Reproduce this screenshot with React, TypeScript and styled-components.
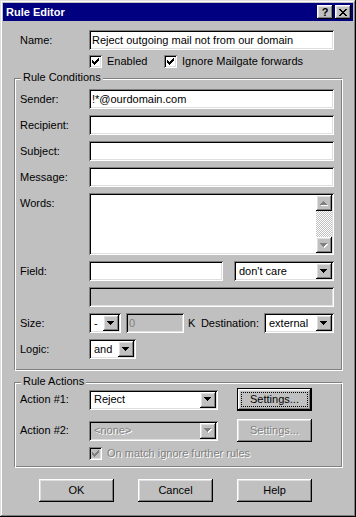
import React from "react";
import styled, { createGlobalStyle, css } from "styled-components";

const GlobalStyle = createGlobalStyle`
  * { box-sizing: border-box; }
  html, body { margin: 0; padding: 0; background: #c0c0c0; }
  body {
    font-family: "Liberation Sans", Arial, sans-serif;
    font-size: 11px;
    color: #000;
  }
`;

const raisedBevel = css`
  box-shadow: inset -1px -1px #000, inset 1px 1px #fff, inset -2px -2px #808080,
    inset 2px 2px #dfdfdf;
`;

const sunkenBevel = css`
  box-shadow: inset 1px 1px #808080, inset -1px -1px #fff, inset 2px 2px #000,
    inset -2px -2px #dfdfdf;
`;

const disabledText = css`
  color: #808080;
  text-shadow: 1px 1px 0 #fff;
`;

const Window = styled.div`
  width: 356px;
  height: 517px;
  padding: 3px;
  background: #c0c0c0;
  box-shadow: inset -1px -1px #000, inset 1px 1px #dfdfdf, inset -2px -2px #808080,
    inset 2px 2px #fff;
  display: flex;
  flex-direction: column;
`;

const TitleBar = styled.div`
  height: 18px;
  flex: none;
  background: #000080;
  color: #fff;
  display: flex;
  align-items: center;
  padding: 0 2px 0 3px;
`;

const TitleText = styled.div`
  flex: 1;
  font-weight: bold;
  line-height: 13px;
`;

const TitleButtons = styled.div`
  display: flex;
  gap: 2px;
`;

const TitleButton = styled.div`
  width: 16px;
  height: 14px;
  background: #c0c0c0;
  ${raisedBevel};
  display: flex;
  align-items: center;
  justify-content: center;
  color: #000;
  font-weight: bold;
  font-size: 11px;
  line-height: 11px;
`;

const Body = styled.div`
  padding: 9px 10px 0 11px;
  display: flex;
  flex-direction: column;
`;

const TopSection = styled.div`
  padding: 0 9px 0 6px;
  display: flex;
  flex-direction: column;
  gap: 5px;
`;

const Row = styled.div<{ $h?: number; $top?: boolean; $mt?: number; $indent?: boolean }>`
  display: flex;
  align-items: ${(p) => (p.$top ? "flex-start" : "center")};
  height: ${(p) => p.$h ?? 20}px;
  margin-top: ${(p) => p.$mt ?? 0}px;
  padding-left: ${(p) => (p.$indent ? 69 : 0)}px;
  flex: none;
`;

const Label = styled.span<{ $top?: boolean }>`
  width: 69px;
  flex: none;
  line-height: 13px;
  white-space: nowrap;
  padding-top: ${(p) => (p.$top ? 4 : 0)}px;
`;

const InlineText = styled.span<{ $ml?: number; $mr?: number; $disabled?: boolean }>`
  line-height: 13px;
  white-space: nowrap;
  margin-left: ${(p) => p.$ml ?? 0}px;
  margin-right: ${(p) => p.$mr ?? 0}px;
  ${(p) => p.$disabled && disabledText};
`;

const Spacer = styled.div`
  flex: 1;
`;

const TextBox = styled.div<{ $w?: number; $disabled?: boolean; $ml?: number }>`
  ${sunkenBevel};
  background: ${(p) => (p.$disabled ? "#c0c0c0" : "#fff")};
  color: ${(p) => (p.$disabled ? "#808080" : "#000")};
  height: 20px;
  ${(p) => (p.$w ? `width: ${p.$w}px; flex: none;` : "flex: 1;")}
  margin-left: ${(p) => p.$ml ?? 0}px;
  padding: 0 3px;
  display: flex;
  align-items: center;
  white-space: nowrap;
  overflow: hidden;
  line-height: 13px;
`;

const TextArea = styled.div`
  ${sunkenBevel};
  background: #fff;
  flex: 1;
  height: 62px;
  padding: 2px;
  display: flex;
  justify-content: flex-end;
`;

const ScrollBar = styled.div`
  width: 16px;
  display: flex;
  flex-direction: column;
`;

const ScrollButton = styled.div`
  width: 16px;
  height: 16px;
  flex: none;
  background: #c0c0c0;
  ${raisedBevel};
  display: flex;
  align-items: center;
  justify-content: center;
`;

const ScrollTrack = styled.div`
  flex: 1;
  background: repeating-conic-gradient(#fff 0 25%, #c0c0c0 0 50%) 0 0 / 2px 2px;
`;

const Combo = styled.div<{ $w: number; $disabled?: boolean; $ml?: number }>`
  ${sunkenBevel};
  width: ${(p) => p.$w}px;
  height: 20px;
  flex: none;
  margin-left: ${(p) => p.$ml ?? 0}px;
  padding: 2px;
  display: flex;
  background: ${(p) => (p.$disabled ? "#c0c0c0" : "#fff")};
`;

const ComboValue = styled.div<{ $disabled?: boolean }>`
  flex: 1;
  display: flex;
  align-items: center;
  padding-left: 3px;
  line-height: 13px;
  white-space: nowrap;
  overflow: hidden;
  ${(p) => p.$disabled && disabledText};
`;

const DropButton = styled.div`
  width: 16px;
  height: 16px;
  flex: none;
  background: #c0c0c0;
  ${raisedBevel};
  display: flex;
  align-items: center;
  justify-content: center;
`;

const CheckGroup = styled.div`
  display: flex;
  align-items: center;
`;

const CheckItem = styled.label<{ $w?: number }>`
  display: flex;
  align-items: center;
  gap: 5px;
  ${(p) => (p.$w ? `width: ${p.$w}px;` : "")}
  flex: none;
`;

const CheckBox = styled.span<{ $disabled?: boolean }>`
  width: 13px;
  height: 13px;
  flex: none;
  ${sunkenBevel};
  background: ${(p) => (p.$disabled ? "#c0c0c0" : "#fff")};
  display: flex;
  align-items: center;
  justify-content: center;
`;

const GroupBox = styled.div<{ $pad: string; $gap: number; $mt: number }>`
  position: relative;
  margin-top: ${(p) => p.$mt}px;
  border-top: 1px solid #808080;
  border-left: 1px solid #808080;
  border-right: 1px solid #fff;
  border-bottom: 1px solid #fff;
  box-shadow: inset 1px 1px #fff, inset -1px -1px #808080;
  padding: ${(p) => p.$pad};
  display: flex;
  flex-direction: column;
  gap: ${(p) => p.$gap}px;
`;

const Legend = styled.span`
  position: absolute;
  top: -8px;
  left: 6px;
  padding: 0 2px;
  background: #c0c0c0;
  line-height: 13px;
  white-space: nowrap;
`;

const PushButton = styled.div<{ $default?: boolean; $disabled?: boolean; $ml?: number }>`
  width: 75px;
  height: 23px;
  flex: none;
  margin-left: ${(p) => p.$ml ?? 0}px;
  background: #c0c0c0;
  ${raisedBevel};
  border: ${(p) => (p.$default ? "1px solid #000" : "none")};
  padding: ${(p) => (p.$default ? "3px" : "4px")};
  display: flex;
  line-height: 13px;
  ${(p) => p.$disabled && disabledText};
`;

const ButtonFace = styled.span<{ $focus?: boolean }>`
  flex: 1;
  display: flex;
  align-items: center;
  justify-content: center;
  border: 1px dotted ${(p) => (p.$focus ? "#000" : "transparent")};
`;

const ButtonRow = styled.div`
  display: flex;
  gap: 24px;
  padding-left: 25px;
  margin-top: 11px;
`;

const DownArrow = ({ color = "#000", shadow = false }: { color?: string; shadow?: boolean }) => (
  <svg width="8" height="5" viewBox="0 0 8 5" shapeRendering="crispEdges">
    {shadow && (
      <path
        d="M1 1h7v1h-7z M2 2h5v1h-5z M3 3h3v1h-3z M4 4h1v1h-1z"
        fill="#fff"
      />
    )}
    <path d="M0 0h7v1h-7z M1 1h5v1h-5z M2 2h3v1h-3z M3 3h1v1h-1z" fill={color} />
  </svg>
);

const UpArrow = ({ color = "#000", shadow = false }: { color?: string; shadow?: boolean }) => (
  <svg width="8" height="5" viewBox="0 0 8 5" shapeRendering="crispEdges">
    {shadow && (
      <path d="M4 1h1v1h-1z M3 2h3v1h-3z M2 3h5v1h-5z M1 4h7v1h-7z" fill="#fff" />
    )}
    <path d="M3 0h1v1h-1z M2 1h3v1h-3z M1 2h5v1h-5z M0 3h7v1h-7z" fill={color} />
  </svg>
);

const CheckMark = ({ color = "#000" }: { color?: string }) => (
  <svg width="7" height="7" viewBox="0 0 7 7" shapeRendering="crispEdges">
    <path
      d="M0 2h1v3h-1z M1 3h1v3h-1z M2 4h1v3h-1z M3 3h1v3h-1z M4 2h1v3h-1z M5 1h1v3h-1z M6 0h1v3h-1z"
      fill={color}
    />
  </svg>
);

const CloseGlyph = () => (
  <svg width="8" height="7" viewBox="0 0 8 7" shapeRendering="crispEdges">
    <path
      d="M0 0h2v1h-2z M6 0h2v1h-2z M1 1h2v1h-2z M5 1h2v1h-2z M2 2h4v1h-4z M3 3h2v1h-2z M2 4h4v1h-4z M1 5h2v1h-2z M5 5h2v1h-2z M0 6h2v1h-2z M6 6h2v1h-2z"
      fill="#000"
    />
  </svg>
);

const Check = ({ label, disabled, w }: { label: string; disabled?: boolean; w?: number }) => (
  <CheckItem $w={w}>
    <CheckBox $disabled={disabled}>
      <CheckMark color={disabled ? "#808080" : "#000"} />
    </CheckBox>
    <InlineText $disabled={disabled}>{label}</InlineText>
  </CheckItem>
);

const ComboBox = ({
  value,
  w,
  disabled,
  ml,
}: {
  value: string;
  w: number;
  disabled?: boolean;
  ml?: number;
}) => (
  <Combo $w={w} $disabled={disabled} $ml={ml}>
    <ComboValue $disabled={disabled}>{value}</ComboValue>
    <DropButton>
      <DownArrow color={disabled ? "#808080" : "#000"} shadow={disabled} />
    </DropButton>
  </Combo>
);

export default function App() {
  return (
    <>
      <GlobalStyle />
      <Window>
        <TitleBar>
          <TitleText>Rule Editor</TitleText>
          <TitleButtons>
            <TitleButton>?</TitleButton>
            <TitleButton>
              <CloseGlyph />
            </TitleButton>
          </TitleButtons>
        </TitleBar>
        <Body>
          <TopSection>
            <Row>
              <Label>Name:</Label>
              <TextBox>Reject outgoing mail not from our domain</TextBox>
            </Row>
            <Row $h={13} $indent>
              <CheckGroup>
                <Check label="Enabled" w={75} />
                <Check label="Ignore Mailgate forwards" />
              </CheckGroup>
            </Row>
          </TopSection>

          <GroupBox $mt={10} $pad="10px 8px 11px 5px" $gap={6}>
            <Legend>Rule Conditions</Legend>
            <Row>
              <Label>Sender:</Label>
              <TextBox>!*@ourdomain.com</TextBox>
            </Row>
            <Row>
              <Label>Recipient:</Label>
              <TextBox />
            </Row>
            <Row>
              <Label>Subject:</Label>
              <TextBox />
            </Row>
            <Row>
              <Label>Message:</Label>
              <TextBox />
            </Row>
            <Row $h={62} $top>
              <Label $top>Words:</Label>
              <TextArea>
                <ScrollBar>
                  <ScrollButton>
                    <UpArrow color="#808080" shadow />
                  </ScrollButton>
                  <ScrollTrack />
                  <ScrollButton>
                    <DownArrow color="#808080" shadow />
                  </ScrollButton>
                </ScrollBar>
              </TextArea>
            </Row>
            <Row>
              <Label>Field:</Label>
              <TextBox $w={134} />
              <ComboBox value="don't care" w={100} ml={11} />
            </Row>
            <Row $indent>
              <TextBox $disabled />
            </Row>
            <Row>
              <Label>Size:</Label>
              <ComboBox value="-" w={32} />
              <TextBox $w={58} $ml={5} $disabled>
                0
              </TextBox>
              <InlineText $ml={4}>K</InlineText>
              <Spacer />
              <InlineText $mr={5}>Destination:</InlineText>
              <ComboBox value="external" w={70} />
            </Row>
            <Row>
              <Label>Logic:</Label>
              <ComboBox value="and" w={47} />
            </Row>
          </GroupBox>

          <GroupBox $mt={11} $pad="5px 8px 7px 5px" $gap={0}>
            <Legend>Rule Actions</Legend>
            <Row $h={23}>
              <Label>Action #1:</Label>
              <ComboBox value="Reject" w={129} />
              <PushButton $default $ml={19}>
                <ButtonFace $focus>Settings...</ButtonFace>
              </PushButton>
            </Row>
            <Row $h={23} $mt={8}>
              <Label>Action #2:</Label>
              <ComboBox value="<none>" w={129} disabled />
              <PushButton $disabled $ml={19}>
                <ButtonFace>Settings...</ButtonFace>
              </PushButton>
            </Row>
            <Row $h={13} $mt={5} $indent>
              <Check label="On match ignore further rules" disabled />
            </Row>
          </GroupBox>

          <ButtonRow>
            <PushButton>
              <ButtonFace>OK</ButtonFace>
            </PushButton>
            <PushButton>
              <ButtonFace>Cancel</ButtonFace>
            </PushButton>
            <PushButton>
              <ButtonFace>Help</ButtonFace>
            </PushButton>
          </ButtonRow>
        </Body>
      </Window>
    </>
  );
}
